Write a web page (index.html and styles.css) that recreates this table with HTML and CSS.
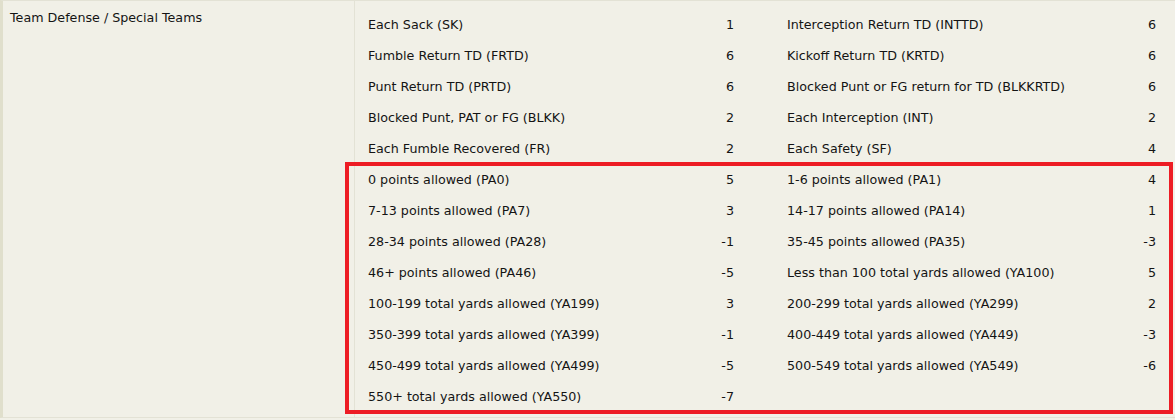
FILE: index.html
```html
<!DOCTYPE html>
<html>
<head>
<meta charset="utf-8">
<link rel="stylesheet" href="styles.css">
</head>
<body>
<div class="wrap">
  <div class="section">
    <div class="cat">Team Defense / Special Teams</div>
    <div class="rules">
      <div class="lbl">Each Sack (SK)</div><div class="val">1</div><div class="lbl l2">Interception Return TD (INTTD)</div><div class="val">6</div>
      <div class="lbl">Fumble Return TD (FRTD)</div><div class="val">6</div><div class="lbl l2">Kickoff Return TD (KRTD)</div><div class="val">6</div>
      <div class="lbl">Punt Return TD (PRTD)</div><div class="val">6</div><div class="lbl l2">Blocked Punt or FG return for TD (BLKKRTD)</div><div class="val">6</div>
      <div class="lbl">Blocked Punt, PAT or FG (BLKK)</div><div class="val">2</div><div class="lbl l2">Each Interception (INT)</div><div class="val">2</div>
      <div class="lbl">Each Fumble Recovered (FR)</div><div class="val">2</div><div class="lbl l2">Each Safety (SF)</div><div class="val">4</div>
      <div class="lbl">0 points allowed (PA0)</div><div class="val">5</div><div class="lbl l2">1-6 points allowed (PA1)</div><div class="val">4</div>
      <div class="lbl">7-13 points allowed (PA7)</div><div class="val">3</div><div class="lbl l2">14-17 points allowed (PA14)</div><div class="val">1</div>
      <div class="lbl">28-34 points allowed (PA28)</div><div class="val">-1</div><div class="lbl l2">35-45 points allowed (PA35)</div><div class="val">-3</div>
      <div class="lbl">46+ points allowed (PA46)</div><div class="val">-5</div><div class="lbl l2">Less than 100 total yards allowed (YA100)</div><div class="val">5</div>
      <div class="lbl">100-199 total yards allowed (YA199)</div><div class="val">3</div><div class="lbl l2">200-299 total yards allowed (YA299)</div><div class="val">2</div>
      <div class="lbl">350-399 total yards allowed (YA399)</div><div class="val">-1</div><div class="lbl l2">400-449 total yards allowed (YA449)</div><div class="val">-3</div>
      <div class="lbl">450-499 total yards allowed (YA499)</div><div class="val">-5</div><div class="lbl l2">500-549 total yards allowed (YA549)</div><div class="val">-6</div>
      <div class="lbl">550+ total yards allowed (YA550)</div><div class="val">-7</div><div class="lbl l2"></div><div class="val"></div>
    </div>
  </div>
  <div class="highlight"></div>
</div>
</body>
</html>
```

FILE: styles.css
```css
html, body {
  margin: 0;
  padding: 0;
  background: #f1f0e7;
}
body {
  font-family: "DejaVu Sans", Verdana, sans-serif;
  font-size: 12.7px;
  color: #141414;
}
.wrap {
  position: relative;
  width: 1175px;
  height: 420px;
  overflow: hidden;
}
.section {
  display: flex;
  border-top: 1px solid #e3e2d5;
  border-left: 3px solid #e0dfcc;
  border-bottom: 1px solid #e3e2d5;
  height: 418px;
  box-sizing: border-box;
}
.cat {
  width: 351px;
  padding: 8px 0 0 7px;
  box-sizing: border-box;
  line-height: 17px;
}
.rules {
  flex: 1;
  border-left: 1px solid #e3e2d5;
  padding: 8px 0 0 13px;
  display: grid;
  grid-template-columns: 331px 35px 385px 37px;
  grid-auto-rows: 31px;
  align-items: center;
}
.val {
  text-align: right;
}
.l2 {
  padding-left: 53px;
}
.highlight {
  position: absolute;
  left: 345px;
  top: 162px;
  width: 828px;
  height: 252px;
  box-sizing: border-box;
  border: 4px solid #ed1c24;
}
```
